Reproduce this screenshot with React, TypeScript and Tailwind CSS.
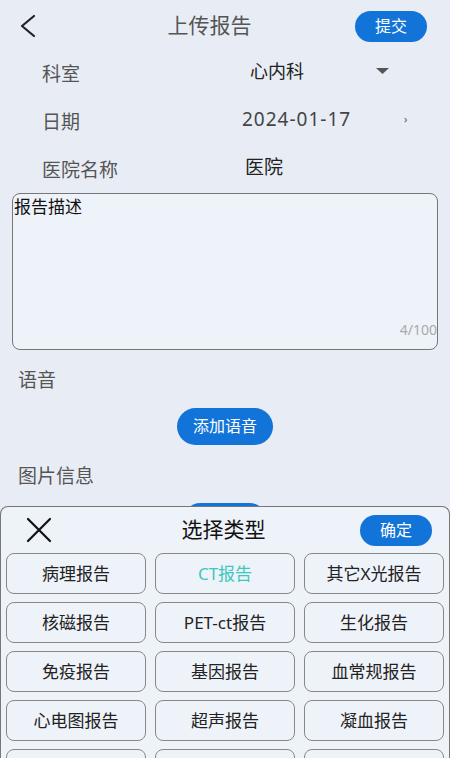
import React, { useState } from "react";

const reportTypes = [
  "病理报告",
  "CT报告",
  "其它X光报告",
  "核磁报告",
  "PET-ct报告",
  "生化报告",
  "免疫报告",
  "基因报告",
  "血常规报告",
  "心电图报告",
  "超声报告",
  "凝血报告",
];

const FieldRow: React.FC<{ label: string; children: React.ReactNode }> = ({ label, children }) => (
  <div className="flex items-center h-[48px] pl-[42px]">
    <span className="w-[200px] text-[19px] text-[#555]">{label}</span>
    {children}
  </div>
);

const App: React.FC = () => {
  const [selected, setSelected] = useState("CT报告");

  return (
    <div
      className="relative w-[450px] h-[758px] overflow-hidden bg-[#e8edf5]"
      style={{ fontFamily: '"Noto Sans", "Noto Sans CJK SC", sans-serif' }}
    >
      {/* header */}
      <div className="flex items-center justify-between h-[52px] pl-[18px] pr-[23px]">
        <svg width="20" height="24" viewBox="0 0 20 24" fill="none">
          <path d="M16 2 L4 12 L16 22" stroke="#222" strokeWidth="2.2" strokeLinecap="round" strokeLinejoin="round" />
        </svg>
        <span className="text-[21px] text-[#555] ml-[26px]">上传报告</span>
        <button className="w-[72px] h-[31px] rounded-full bg-[#1273d8] text-white text-[16px]">提交</button>
      </div>

      <div className="mt-[-2px]">
        <FieldRow label="科室">
          <span className="text-[18px] text-[#222] w-[126px] ml-[8px] -mt-[6px]">心内科</span>
          <svg width="13" height="7" viewBox="0 0 13 7" className="-mt-[6px]">
            <path d="M0 0 L13 0 L6.5 6 Z" fill="#555" />
          </svg>
        </FieldRow>
        <FieldRow label="日期">
          <span className="text-[19px] text-[#444] w-[162px] -mt-[6px] tracking-[1px]">2024-01-17</span>
          <span className="text-[11px] text-[#555] -mt-[6px]">›</span>
        </FieldRow>
        <FieldRow label="医院名称">
          <span className="text-[19px] text-[#222] ml-[3px] -mt-[6px]">医院</span>
        </FieldRow>
      </div>

      {/* description */}
      <div className="relative mx-[12px] -mt-[1px] h-[157px] rounded-[8px] border border-[#777] bg-[#eef2f9]">
        <div className="px-[1px] pt-[0px] text-[17px] text-[#111]">报告描述</div>
        <span className="absolute right-[0px] bottom-[9px] text-[14px] text-[#aaa]">4/100</span>
      </div>

      <div className="pl-[18px] mt-[16px] text-[19px] text-[#555]">语音</div>
      <div className="flex justify-center mt-[13px]">
        <button className="w-[96px] h-[37px] rounded-full bg-[#1273d8] text-white text-[16px]">添加语音</button>
      </div>
      <div className="pl-[18px] mt-[17px] text-[19px] text-[#555]">图片信息</div>
      <div className="flex justify-center mt-[13px]">
        <div className="w-[86px] h-[37px] rounded-full bg-[#1273d8]" />
      </div>

      {/* bottom sheet */}
      <div className="absolute left-0 right-0 top-[506px] bottom-0 rounded-t-[8px] border border-[#777] border-b-0 bg-[#eef2f9] px-[5px]">
        <div className="flex items-center justify-between h-[46px] pl-[19px] pr-[12px]">
          <svg width="28" height="28" viewBox="0 0 28 28">
            <path d="M3 3 L25 25 M25 3 L3 25" stroke="#111" strokeWidth="2.2" strokeLinecap="round" />
          </svg>
          <span className="text-[21px] text-[#111] ml-[34px]">选择类型</span>
          <button className="w-[72px] h-[31px] rounded-full bg-[#1273d8] text-white text-[16px]">确定</button>
        </div>
        <div className="grid grid-cols-3 gap-x-[9px] gap-y-[8px]">
          {reportTypes.map((t) => (
            <button
              key={t}
              onClick={() => setSelected(t)}
              className={`h-[41px] rounded-[8px] border border-[#888] bg-[#eef2f9] text-[17px] ${
                selected === t ? "text-[#3cc8bd]" : "text-[#222]"
              }`}
            >
              {t}
            </button>
          ))}
          <div className="h-[41px] rounded-[8px] border border-[#888]" />
          <div className="h-[41px] rounded-[8px] border border-[#888]" />
          <div className="h-[41px] rounded-[8px] border border-[#888]" />
        </div>
      </div>
    </div>
  );
};

export default App;
